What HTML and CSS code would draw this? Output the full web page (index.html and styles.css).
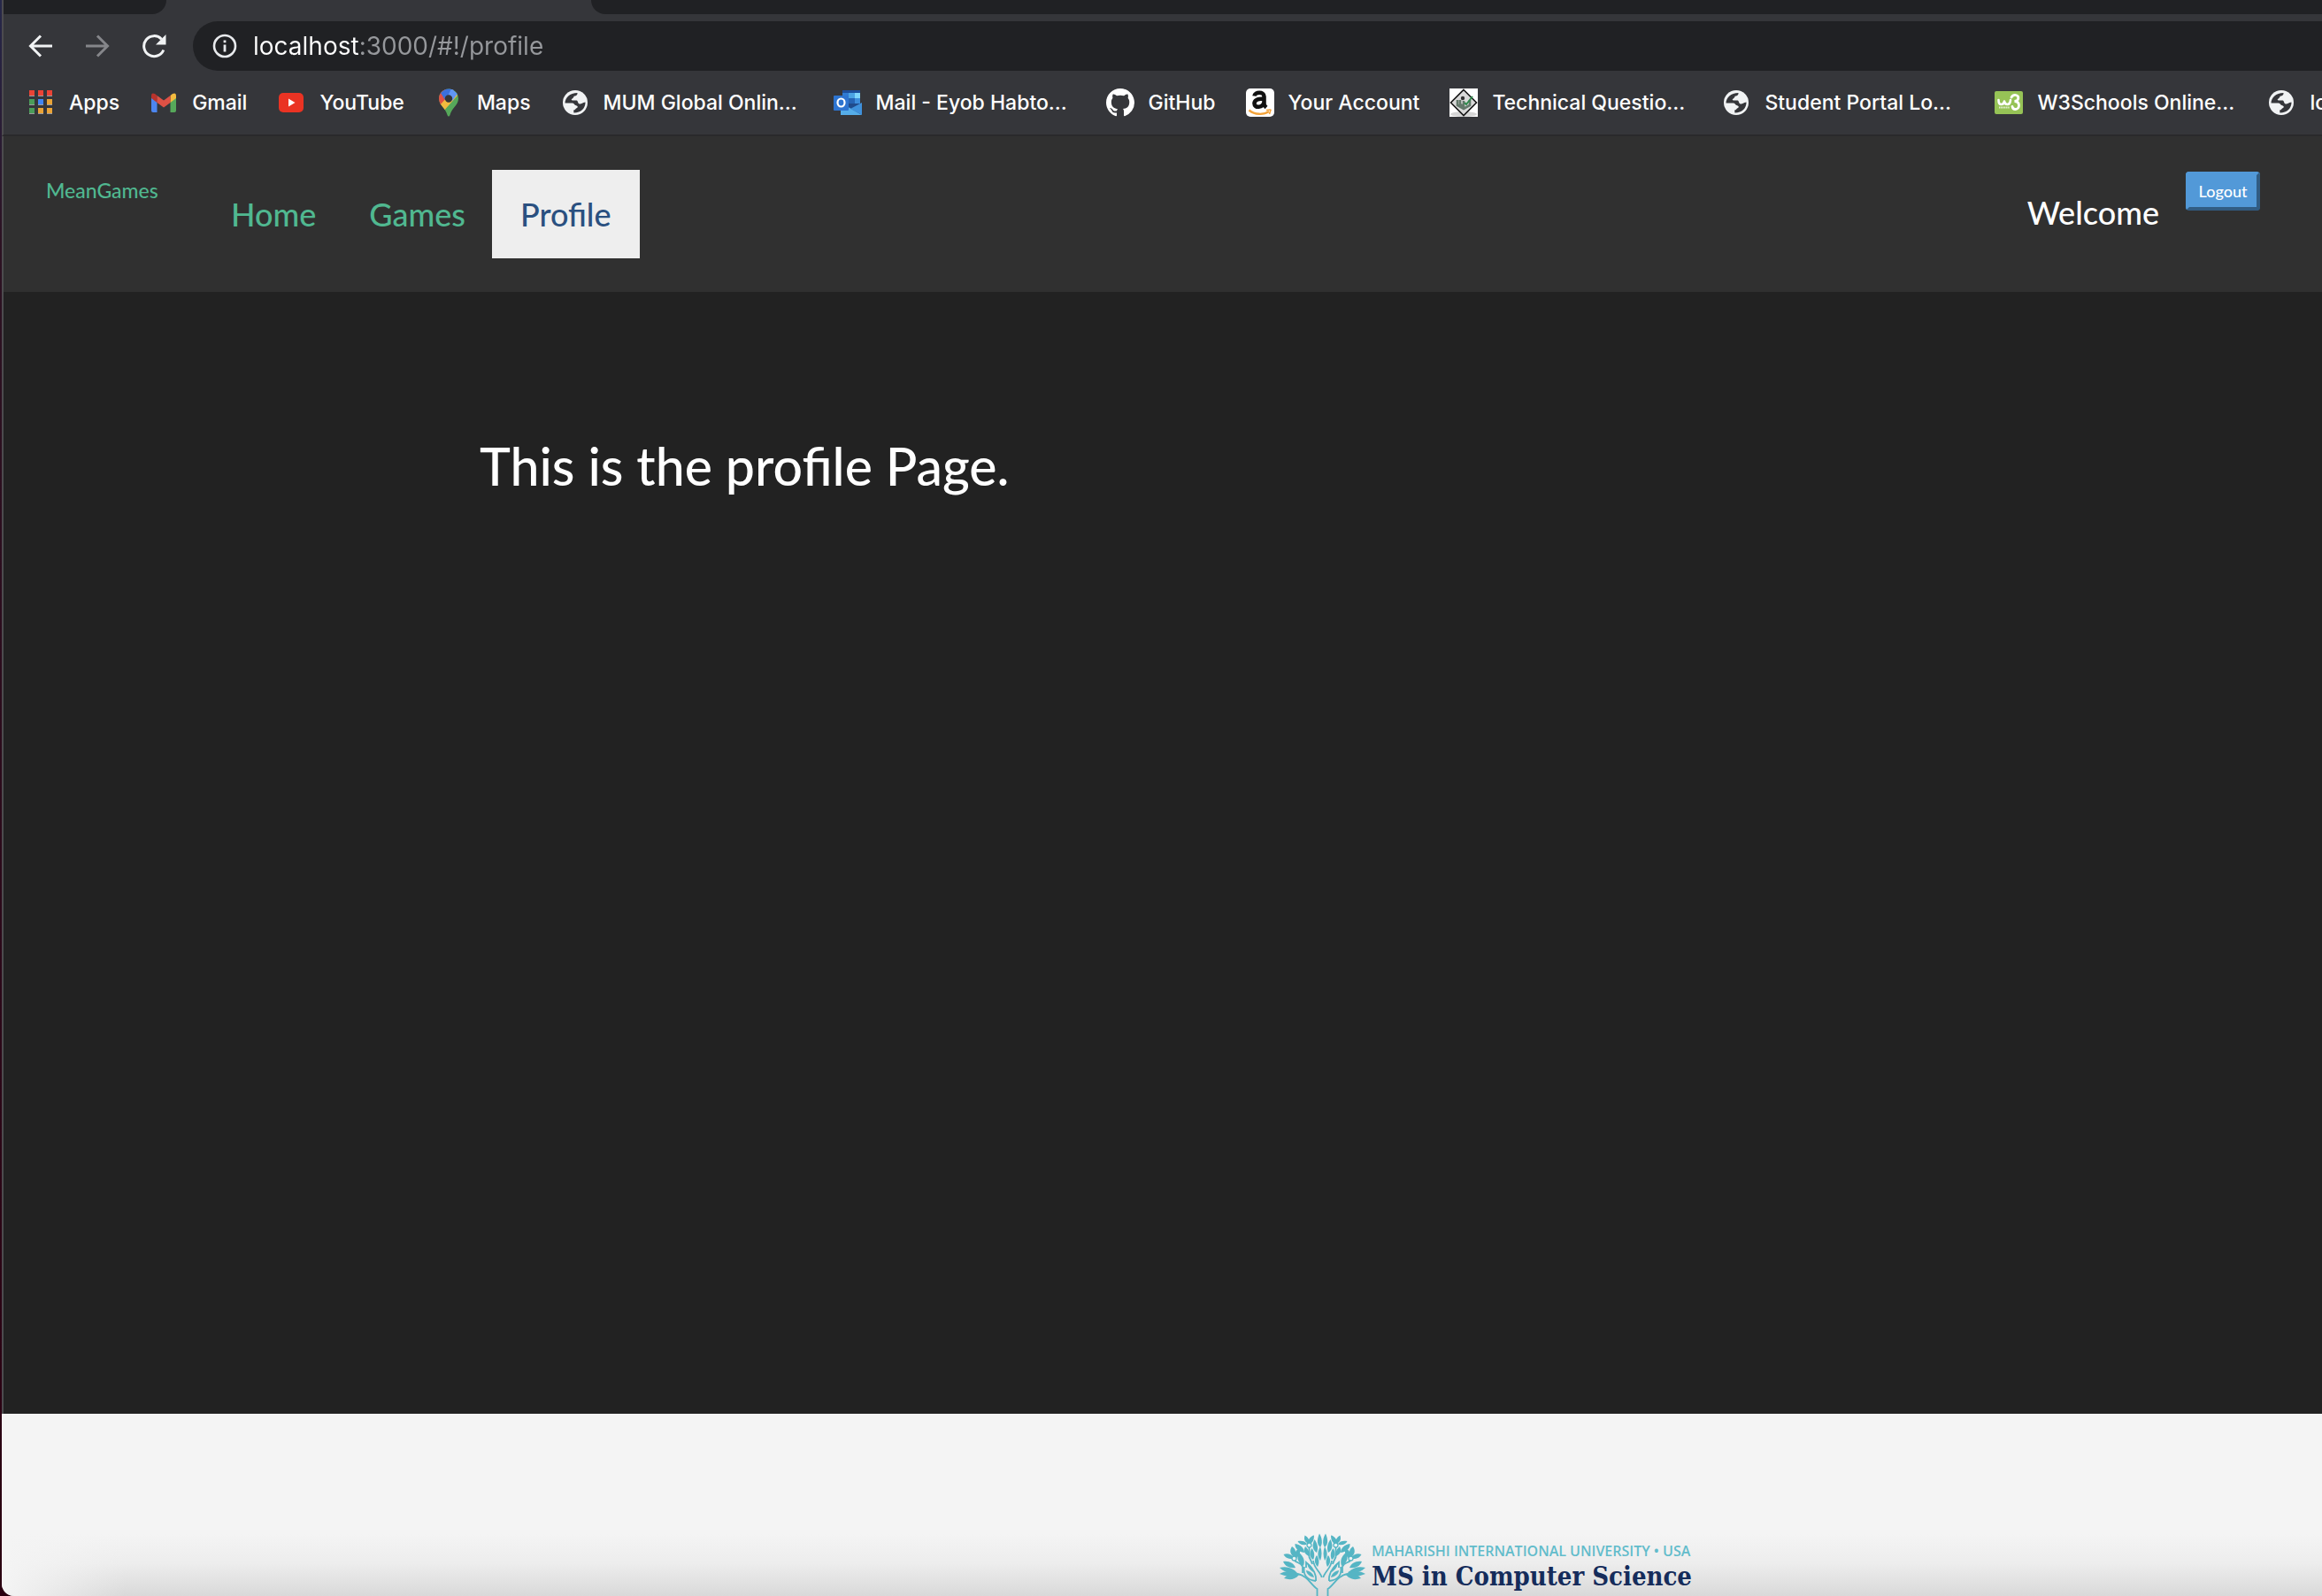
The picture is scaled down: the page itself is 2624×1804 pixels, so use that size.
FILE: index.html
```html
<!DOCTYPE html>
<html lang="en">
<head>
<meta charset="utf-8">
<title>MeanGames</title>
<link rel="stylesheet" href="styles.css">
</head>
<body>
<svg class="defs" aria-hidden="true">
  <symbol id="globe" viewBox="0 0 28 28">
    <circle cx="14" cy="14" r="14" fill="#f1f3f4"/>
    <path fill="#35363a" d="M2.5 14.4C2.6 8.500 8 3 16.500 3C16.600 5.800 15 6.300 12.600 6.800C12.200 8.800 11 9 9.800 10.200C9.400 11.800 11.500 11.300 15.600 11.400C17.400 11.700 16.600 14.800 19 15.400C21 15.800 21.800 14 25.500 13.500C25.800 20 20.500 25.600 12.400 25.500L12.200 22.600C14 22.500 14.200 20.800 16.400 19.800C17.500 18.200 16.200 17.300 14.500 16.900C13 16.400 12.600 14.500 10.600 14.400Z"/>
  </symbol>
</svg>
<div class="window">
  <div class="tabs"><div class="tab-left"></div><div class="tab-right"></div></div>
  <div class="toolbar">
    <button class="tool" aria-label="Back"><svg width="28" height="28" viewBox="0 0 28 28" fill="none" stroke="#f1f3f4" stroke-width="3"><path d="M27 14H3M14 2.500L2.500 14L14 25.500"/></svg></button>
    <button class="tool" aria-label="Forward"><svg width="28" height="28" viewBox="0 0 28 28" fill="none" stroke="#85868a" stroke-width="3"><path d="M1 14H25M14 2.500L25.500 14L14 25.500"/></svg></button>
    <button class="tool" aria-label="Reload"><svg width="28" height="28" viewBox="0 0 28 28"><path d="M24.800 18.500A11.500 11.500 0 1 1 22.500 6.200" fill="none" stroke="#f1f3f4" stroke-width="3"/><path d="M27.500 1V12.500H16Z" fill="#f1f3f4"/></svg></button>
    <div class="omnibox">
      <svg width="28" height="28" viewBox="0 0 28 28"><circle cx="14" cy="14" r="12" fill="none" stroke="#e8eaed" stroke-width="2.600"/><path d="M14 12.500V20.500M14 7.500V10.300" stroke="#e8eaed" stroke-width="2.800"/></svg>
      <input class="address" type="text" aria-label="Address" value="localhost:3000/#!/profile">
    </div>
  </div>
  <nav class="bookmarks" aria-label="Bookmarks">
    <a href="#"><svg viewBox="0 0 32 32"><g fill="#ea4335"><path d="M3 2h6v6h-6zM13 2h6v6h-6zM23 2h6v6h-6z"/></g><path fill="#4b9d59" d="M3 12h6v6h-6zM3 22h6v6h-6z"/><path fill="#4285f4" d="M13 12h6v6h-6z"/><path fill="#eaa336" d="M23 12h6v6h-6zM13 22h6v6h-6zM23 22h6v6h-6z"/><path fill="#9a9b9e" d="M3 8h6v1h-6zM13 8h6v1h-6zM23 8h6v1h-6zM3 18h6v1h-6zM13 18h6v1h-6zM23 18h6v1h-6zM3 28h6v1h-6zM13 28h6v1h-6zM23 28h6v1h-6z"/></svg><span>Apps</span></a>
    <a href="#"><svg viewBox="0 0 32 32"><path fill="#4c86f0" d="M2 9L8.500 13.500V27H4Q2 27 2 25Z"/><path fill="#56a85a" d="M30 9L23.500 13.500V27H28Q30 27 30 25Z"/><path fill="#f3bb3f" d="M23.500 8L26 6Q30 4 30 8.500V11L23.500 16Z"/><path fill="#b8332c" d="M8.500 8L6 6Q2 4 2 8.500V11L8.500 16Z"/><path fill="#de5145" d="M8.500 8L16 13.600L23.500 8V16L16 21.500L8.500 16Z"/></svg><span>Gmail</span></a>
    <a href="#"><svg viewBox="0 0 32 32"><rect x="2" y="5" width="28" height="22" rx="5" fill="#ea3323"/><path fill="#fff" d="M13 11.500L20.500 16L13 20.500Z"/></svg><span>YouTube</span></a>
    <a href="#"><svg viewBox="0 0 32 32"><clipPath id="pin"><path d="M16 0.500C9.500 0.500 5 5.500 5 11.500C5 19 12.500 22 14.500 30Q15 31.500 16 31.500T17.500 30C19.500 22 27 19 27 11.500C27 5.500 22.500 0.500 16 0.500Z"/></clipPath><g clip-path="url(#pin)"><path fill="#56a85a" d="M0 0H32V32H0Z"/><path fill="#f3bb3f" d="M3 21L20 0L26 8L9 27Z"/><path fill="#de5145" d="M0 0H12L16 8L5 20L0 14Z"/><path fill="#3a70dd" d="M7 5L13 0H24L12 13Z"/><path fill="#6096f5" d="M19 0L26 6L20 14L15 9Z"/></g><circle cx="16" cy="11.500" r="4.200" fill="#35363a"/></svg><span>Maps</span></a>
    <a href="#"><svg viewBox="0 0 32 32"><use href="#globe" x="2" y="2" width="28" height="28"/></svg><span class="cut">MUM Global Onlin...</span></a>
    <a href="#"><svg viewBox="0 0 32 32"><path fill="#1d4f9c" d="M10 2H30V6H10Z"/><path fill="#2f7bd2" d="M10 5H17V22H10Z"/><path fill="#4ba3e3" d="M17 5H24V11H17Z"/><path fill="#7fd6fb" d="M24 5H30V11H24Z"/><path fill="#2664b5" d="M17 11H24V17H17Z"/><path fill="#3d8ddc" d="M24 11H30V17H24Z"/><path fill="#204b8c" d="M10 17H30V24H10Z"/><path fill="#55ade9" d="M8 16L32 30H8Z"/><path fill="#3f91dc" d="M32 16V30L19 23Z"/><rect y="8" width="17" height="17" rx="1" fill="#2d74d0"/><ellipse cx="8.500" cy="16" rx="4" ry="4.500" fill="none" stroke="#fff" stroke-width="2.200"/></svg><span class="cut">Mail - Eyob Habto...</span></a>
    <a href="#"><svg viewBox="0 0 16 16"><path fill="#fff" d="M8 0C3.580 0 0 3.580 0 8c0 3.540 2.290 6.530 5.470 7.590.4.070.55-.17.55-.38 0-.19-.01-.82-.01-1.490-2.010.37-2.530-.49-2.690-.94-.09-.23-.48-.94-.82-1.130-.28-.15-.68-.52-.01-.53.63-.01 1.080.58 1.230.82.72 1.210 1.870.87 2.330.66.07-.52.28-.87.51-1.070-1.780-.2-3.640-.89-3.640-3.950 0-.87.31-1.590.82-2.150-.08-.2-.36-1.020.08-2.120 0 0 .67-.21 2.200.82.64-.18 1.320-.27 2-.27s1.360.09 2 .27c1.530-1.040 2.200-.82 2.200-.82.44 1.100.16 1.920.08 2.120.51.56.82 1.270.82 2.150 0 3.070-1.870 3.750-3.650 3.950.29.25.54.73.54 1.480 0 1.070-.01 1.930-.01 2.200 0 .21.15.46.55.38A8.010 8.010 0 0 0 16 8c0-4.420-3.580-8-8-8Z"/></svg><span>GitHub</span></a>
    <a href="#"><svg viewBox="0 0 32 32"><rect width="32" height="32" rx="5" fill="#fff"/><path fill="none" stroke="#111" stroke-width="4.600" d="M9.500 8.500C10 3.600 20.500 3.200 20.500 9V17.500Q20.600 19.500 23 21.500M20.500 11.500C12 11.500 9.500 14 9.500 17C9.500 22.500 19 22 20.500 15.500"/><path fill="none" stroke="#f3a33a" stroke-width="2.400" d="M3.500 24.500C10 30 20 30 26 26"/><path fill="none" stroke="#f3a33a" stroke-width="1.600" d="M23 24.500Q28.500 23.500 28 24.500T26.500 29"/></svg><span>Your Account</span></a>
    <a href="#"><svg viewBox="0 0 32 32"><path fill="#fff" d="M0 0H32V32H0Z"/><ellipse cx="16" cy="29" rx="15" ry="3" fill="#d5d5d5"/><path fill="#d9d9d9" stroke="#151515" stroke-width="1.600" d="M16 1.500L30.500 16L16 30.500L1.500 16Z"/><path fill="none" stroke="#63786a" stroke-width="2.600" d="M9 13V19L16 23L23 19V13M16 14V23M12 13V18L16 20"/><path fill="none" stroke="#2f8a4c" stroke-width="2" d="M17 16L19 18L26 9"/><circle cx="15" cy="11" r="2.200" fill="#333"/></svg><span class="cut">Technical Questio...</span></a>
    <a href="#"><svg viewBox="0 0 32 32"><use href="#globe" x="2" y="2" width="28" height="28"/></svg><span class="cut">Student Portal Lo...</span></a>
    <a href="#"><svg viewBox="0 0 32 32"><rect y="3" width="32" height="26" rx="2" fill="#96c356"/><path fill="none" stroke="#fff" stroke-width="2.600" stroke-linejoin="round" stroke-linecap="round" d="M4.500 13Q4.500 18 7.500 18T11 14.500Q11.500 18 14.500 18T18 13"/><path fill="none" stroke="#fff" stroke-width="2.800" stroke-linecap="round" d="M19 10Q21 6.800 24 7.500C28 8.500 28 14 22.500 14.500C29 14.500 29 23 23.500 23.500Q20.500 23.500 20 20.500"/><path stroke="#e4f0d2" stroke-width="1.800" stroke-dasharray="1.300 .6" d="M5 21.500H17"/></svg><span class="cut">W3Schools Online...</span></a>
    <a href="#"><svg viewBox="0 0 32 32"><use href="#globe" x="2" y="2" width="28" height="28"/></svg><span class="cut">lo</span></a>
  </nav>
  <header class="navbar">
    <a class="brand" href="#">MeanGames</a>
    <nav class="pills" aria-label="Main">
      <a href="#">Home</a>
      <a href="#">Games</a>
      <a class="active" href="#" aria-current="page">Profile</a>
    </nav>
    <span class="welcome">Welcome</span>
    <button class="logout">Logout</button>
  </header>
  <main class="content">
    <h1>This is the profile Page.</h1>
  </main>
  <footer class="footer">
    <svg class="tree" viewBox="0 0 97 71" aria-hidden="true">
      <g id="half" fill="#55b5c4">
        <path d="M46 16C41 12 43 5 45 0.500C48 5 49 12 46 16Z"/>
        <path d="M42 22C36 18 37 12 39.500 7C43 12 44 17 42 22Z"/>
        <path d="M46 31C42 26 43 20 46 15C48 20 48 26 46 31Z"/>
        <path d="M43 38C39 34 39 29 42 25C45 29 45 34 43 38Z"/>
        <path d="M31 11C27 8 28 5 28.500 2.500C31 4 32 5 33 7C35 4 37 2.500 39 2.500C39 7 38 10 35 12Z"/>
        <path d="M30 13C25 14 22 12 20.500 9C25 8 29 9 31 12Z"/>
        <path d="M28 22C21 21 17 17 17.500 12C24 13 28 17 28 22Z"/>
        <path d="M33 26C27 23 27 19 29 15C33 18 34 22 33 26Z"/>
        <path d="M38 30C33 27 34 21 36.500 17C39.500 21 40 26 38 30Z"/>
        <path d="M15 26C11 22 12 18 14 15C17 17 18 19 18 21C19 19 20 18 23 17C24 22 22 26 19 28Z"/>
        <path d="M14 29C9 29 6 27 4.500 24C9 22 13 24 16 27Z"/>
        <path d="M27 37C20 33 19 27 22 22C27 26 29 31 27 37Z"/>
        <path d="M18 39C11 40 6 37 4 32C11 31 16 34 18 39Z"/>
        <path d="M20 45C12 46 5 44 0 39C8 37 15 39 20 45Z"/>
        <path d="M22 46C15 50 7 49 0 46C7 42 15 43 22 46Z"/>
        <path d="M22 47C17 53 11 53 5 51C9 46 15 45 22 47Z"/>
        <g fill="none" stroke="#55b5c4" stroke-width="1.800">
          <path d="M42.500 71V63C35 58 32 48 20 46M47.800 50C45 42 39 40 38 31M33.500 16V27Q36 32 37 35M17 31C20 34 24 33 26 38V45"/>
          <path d="M41 54C31 53 26 47 28 38M41 54C42 45 36 38 30 33V39"/>
        </g>
        <path d="M39 50C33 49 30 45 30 42C35 43 38 46 39 50ZM38 44C32 40 31 36 32 34C36 37 38 40 38 44Z"/>
        <circle cx="33.500" cy="13.500" r="2.500" fill="#e9f3f4" stroke="#55b5c4" stroke-width="1.300"/>
        <circle cx="16.500" cy="28.500" r="2.500" fill="#e9f3f4" stroke="#55b5c4" stroke-width="1.300"/>
      </g>
      <use href="#half" transform="matrix(-1 0 0 1 97 0)"/>
    </svg>
    <div class="school">
      <span class="university">MAHARISHI INTERNATIONAL UNIVERSITY • USA</span>
      <span class="program">MS in Computer Science</span>
    </div>
  </footer>
</div>
</body>
</html>
```
FILE: styles.css
```css
* { box-sizing: border-box; }
html { background: linear-gradient(#26284a, #2c1222 15%, #2a0010); }
body { margin: 0; }
a { text-decoration: none; }
button { padding: 0; border: 0; background: none; }
svg { display: block; flex: none; }
.defs { position: absolute; width: 0; height: 0; }

.window {
  display: flex;
  flex-direction: column;
  height: 100vh;
  margin-left: 2px;
  overflow: hidden;
  border-bottom-left-radius: 14px;
  font-family: Lato, "Liberation Sans", sans-serif;
  font-weight: 500;
}
.tabs, .toolbar, .bookmarks, .navbar, .content { border-left: 2px solid #4c4b4e; }

/* browser frame */
.tabs {
  display: flex;
  justify-content: space-between;
  gap: 480px;
  height: 16px;
  background: #35363a;
}
.tab-left { width: 184px; flex: none; background: #202124; border-bottom-right-radius: 16px; }
.tab-right { flex: 1; background: #202124; border-bottom-left-radius: 16px; }
.toolbar {
  display: flex;
  align-items: center;
  gap: 36px;
  padding: 8px 0 8px 28px;
  background: #35363a;
}
.omnibox {
  display: flex;
  flex: 1;
  align-items: center;
  gap: 18px;
  height: 56px;
  margin-left: -6px;
  padding-left: 22px;
  background: #202124;
  border-radius: 28px 0 0 28px;
}
.address {
  flex: 1;
  padding: 0;
  border: 0;
  outline: 0;
  color: transparent;
  background: linear-gradient(to right, #fff 120px, #96989c 120px);
  -webkit-background-clip: text;
  background-clip: text;
  font: 28px/40px Inter, "Liberation Sans", sans-serif;
}
.bookmarks {
  display: flex;
  gap: 34px;
  height: 66px;
  padding: 10px 0 0 26px;
  overflow: hidden;
  background: #35363a;
  border-bottom: 2px solid #29292b;
}
.bookmarks a {
  display: flex;
  flex: none;
  gap: 16px;
  height: 36px;
  align-items: center;
  color: #fff;
  font: 500 23px/36px Inter, "Liberation Sans", sans-serif;
  white-space: nowrap;
}
.bookmarks svg { width: 32px; height: 32px; }
.bookmarks .cut { width: 226px; }

/* site */
.navbar {
  display: flex;
  align-items: flex-start;
  padding: 38px 70px 38px 48px;
  background: #303030;
}
.brand { width: 132px; padding-top: 8px; color: #50b890; font-size: 23px; line-height: 30px; }
.pills { display: flex; margin-left: 47px; }
.pills a {
  padding: 0 30px;
  color: #50b890;
  font-size: 36px;
  line-height: 100px;
}
.pills .active { padding: 0 32px; background: #eee; color: #2a5080; }
.welcome { margin-left: auto; color: #fff; font-size: 36px; line-height: 96px; }
.logout {
  width: 84px;
  height: 44px;
  margin: 2px 0 0 30px;
  border: 4px solid;
  border-color: #5299d8 #315c82 #315c82 #5299d8;
  border-radius: 4px;
  background: #5299d8;
  color: #fff;
  font: 500 18px/34px Lato, "Liberation Sans", sans-serif;
}
.content {
  flex: 1;
  padding: 160px 40px 0 538px;
  background: #222;
  color: #fff;
}
h1 { margin: 0; font-size: 59px; font-weight: 500; line-height: 74px; }
.footer {
  display: flex;
  justify-content: center;
  gap: 7px;
  padding-top: 135px;
  padding-left: 732px;
  background:
    linear-gradient(to right, #f4f4f4, rgba(244, 244, 244, 0) 140px),
    linear-gradient(#f4f4f4 66%, #ededed 82%, #d9d9d9);
}
.tree { width: 97px; height: 71px; }
.school { display: flex; flex-direction: column; padding-top: 9px; }
.university { color: #62bccb; font: 600 16px/22px "Open Sans", "Liberation Sans", sans-serif; }
.program { color: #152c5b; font: bold 29px/36px "Roboto Slab", "DejaVu Serif Condensed", "Liberation Serif", serif; }
```
